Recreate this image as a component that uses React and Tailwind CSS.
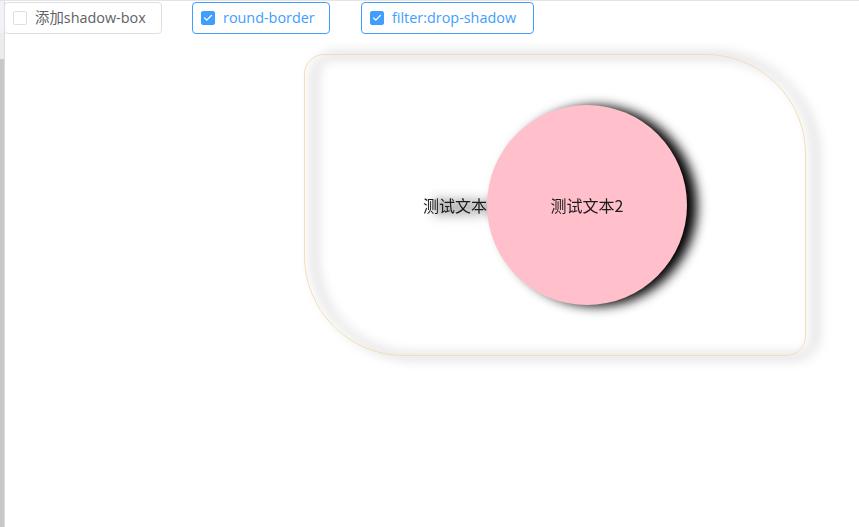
import { Check } from 'lucide-react';

function BorderCheckbox({ label, checked, width, className = '' }) {
    return (
        <label
            className={`flex items-center h-[32px] pl-[8px] pr-[14px] rounded-[4px] border bg-white cursor-pointer ${checked ? 'border-[#409eff]' : 'border-[#dcdfe6]'} ${className}`}
            style={{ width }}
        >
            <span
                className={`flex items-center justify-center w-[14px] h-[14px] rounded-[2px] border ${checked ? 'bg-[#409eff] border-[#409eff]' : 'bg-white border-[#dcdfe6]'}`}
            >
                {checked && <Check size={10} strokeWidth={3} className="text-white" />}
            </span>
            <span className={`ml-[8px] text-[14.4px] leading-none whitespace-nowrap ${checked ? 'text-[#409eff]' : 'text-[#606266]'}`}>
                {label}
            </span>
        </label>
    );
}

export default function App() {
    return (
        <div
            className="flex h-[527px] w-full border-t border-[#e4e4e4] bg-white overflow-hidden"
            style={{ fontFamily: '"Open Sans", "Noto Sans CJK SC", sans-serif' }}
        >
            {/* left frame strip */}
            <div className="flex flex-col w-[4px] shrink-0">
                <div className="h-[32px] bg-[#f2f2f6]" />
                <div className="h-[26px] bg-[#ececec]" />
                <div className="flex-1 bg-[#c8c8c8]" />
            </div>

            <div className="flex-1 border-l border-[#dcdce6]">
                <div className="flex items-center mt-px -ml-px">
                    <BorderCheckbox label="添加shadow-box" checked={false} width={158} />
                    <BorderCheckbox label="round-border" checked width={138} className="ml-[30px]" />
                    <BorderCheckbox label="filter:drop-shadow" checked width={173} className="ml-[31px]" />
                </div>

                <div
                    className="mt-[20px] ml-[299px] w-[502px] h-[302px] border border-[#f5dcb4] rounded-[20px_100px] flex items-center justify-center text-[16px] text-[#1a1a1a] [filter:drop-shadow(10px_1px_6px_#000)]"
                    style={{ fontFamily: '"Noto Sans CJK SC", sans-serif' }}
                >
                    <span className="leading-none">测试文本</span>
                    <div className="w-[200px] h-[200px] rounded-full bg-[#ffc0cb] flex items-center justify-center">
                        <span className="leading-none">测试文本2</span>
                    </div>
                </div>
            </div>
        </div>
    );
}
